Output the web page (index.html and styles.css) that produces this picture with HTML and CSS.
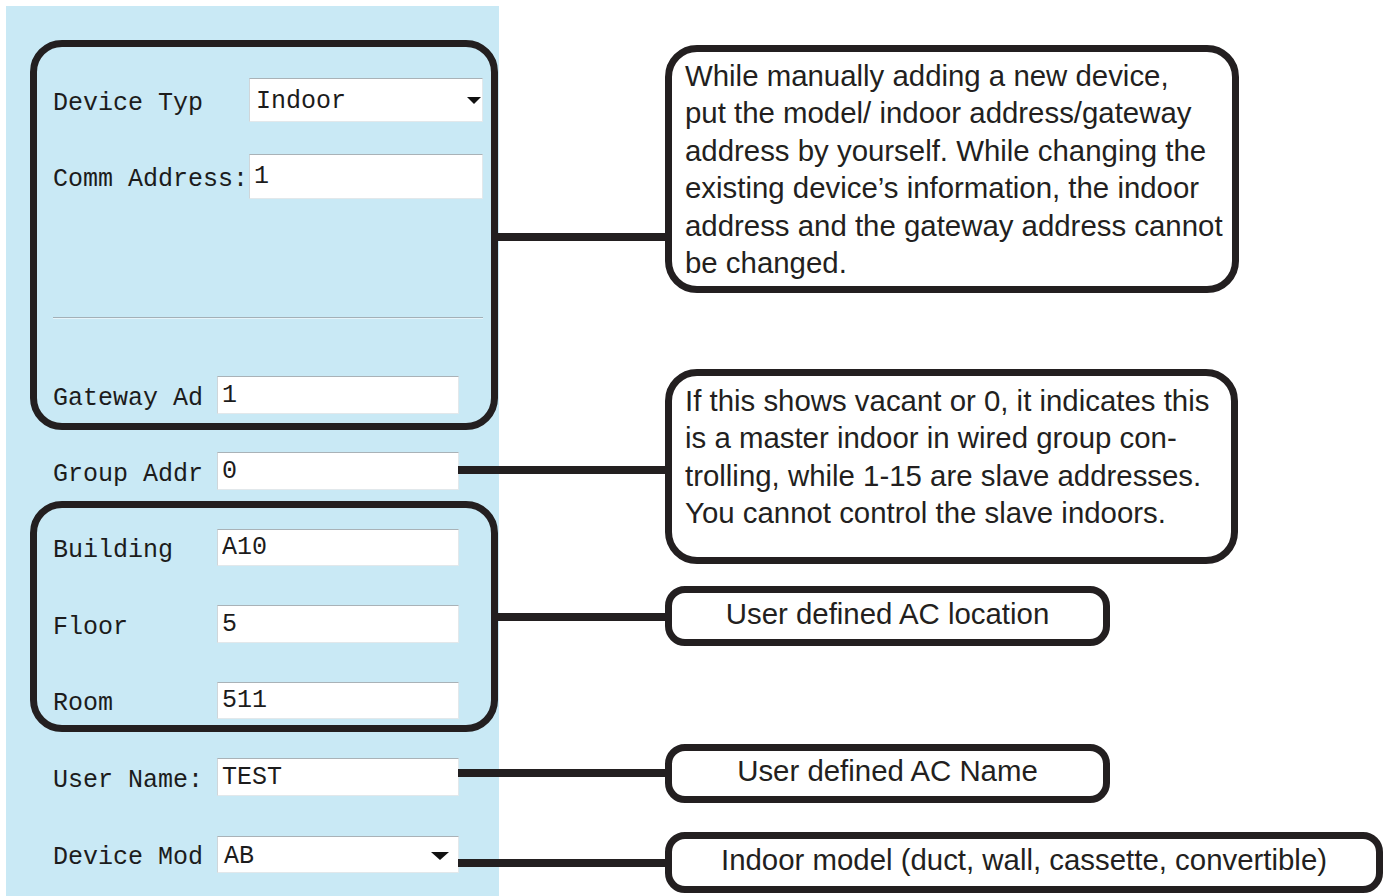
FILE: index.html
```html
<!DOCTYPE html>
<html lang="en">
  <head>
    <meta charset="UTF-8" />
    <meta name="viewport" content="width=device-width, initial-scale=1.0" />
    <title>Device settings</title>
    <link rel="stylesheet" href="styles.css">
  </head>
  <body>
    <div class="page">
      <!-- settings form -->
      <div class="panel">
        <div class="group group-top">
          <div class="row row-type">
            <span class="label label-wide">Device Typ</span>
            <div class="field field-wide select">Indoor<span class="arrow"></span></div>
          </div>
          <div class="row row-comm">
            <span class="label label-wide">Comm Address:</span>
            <input class="field field-wide" type="text" value="1" readonly />
          </div>
          <div class="sep"></div>
          <div class="row row-gateway">
            <span class="label">Gateway Ad</span>
            <input class="field" type="text" value="1" readonly />
          </div>
        </div>

        <div class="row row-group">
          <span class="label">Group Addr</span>
          <input class="field" type="text" value="0" readonly />
        </div>

        <div class="group group-loc">
          <div class="row row-building">
            <span class="label">Building</span>
            <input class="field" type="text" value="A10" readonly />
          </div>
          <div class="row row-floor">
            <span class="label">Floor</span>
            <input class="field" type="text" value="5" readonly />
          </div>
          <div class="row row-room">
            <span class="label">Room</span>
            <input class="field" type="text" value="511" readonly />
          </div>
        </div>

        <div class="row row-user">
          <span class="label">User Name:</span>
          <input class="field" type="text" value="TEST" readonly />
        </div>

        <div class="row row-model">
          <span class="label">Device Mod</span>
          <div class="field select select-model">AB<span class="arrow"></span></div>
        </div>
      </div>

      <!-- connectors -->
      <div class="wire wire-top"></div>
      <div class="wire wire-group"></div>
      <div class="wire wire-loc"></div>
      <div class="wire wire-user"></div>
      <div class="wire wire-model"></div>

      <!-- notes -->
      <div class="note note-top">
        <p>While manually adding a new device,<br>put the model/ indoor address/gateway<br>address by yourself. While changing the<br>existing device’s information, the indoor<br>address and the gateway address cannot<br>be changed.</p>
      </div>
      <div class="note note-group">
        <p>If this shows vacant or 0, it indicates this<br>is a master indoor in wired group con-<br>trolling, while 1-15 are slave addresses.<br>You cannot control the slave indoors.</p>
      </div>
      <div class="note note-short note-loc">User defined AC location</div>
      <div class="note note-short note-user">User defined AC Name</div>
      <div class="note note-short note-model">Indoor model (duct, wall, cassette, convertible)</div>
    </div>
  </body>
</html>
```

FILE: styles.css
```css
body {
  margin: 0;
  background: #fff;
  overflow: hidden;
}

.page {
  position: relative;
  width: 1391px;
  height: 896px;
  padding: 6px 0 0 6px;
  box-sizing: border-box;
}

/* left form panel */
.panel {
  width: 493px;
  height: 890px;
  padding: 34px 1px 0 24px;
  box-sizing: border-box;
  background: #c9e9f5;
  display: flex;
  flex-direction: column;
}

.group {
  width: 468px;
  border: 7px solid #231f20;
  border-radius: 32px;
  box-sizing: border-box;
  display: flex;
  flex-direction: column;
}

.group-top {
  height: 390px;
  padding: 31px 8px 9px 16px;
}

.group-loc {
  height: 231px;
  margin-top: 11px;
  padding: 21px 8px 6px 16px;
}

.row {
  display: flex;
  align-items: center;
}

.label {
  width: 164px;
  flex-shrink: 0;
  padding-top: 6px;
  font-family: "Liberation Mono", "Courier New", monospace;
  font-size: 25px;
  color: #1c1c1c;
  white-space: nowrap;
}

.label-wide {
  width: 196px;
}

.field {
  position: relative;
  width: 242px;
  height: 38px;
  margin: 0;
  padding: 0 4px;
  box-sizing: border-box;
  border: 1px solid #e2e8eb;
  border-top-color: #a9b2b7;
  border-left-color: #cfd6da;
  border-radius: 0;
  background: #fff;
  font-family: "Liberation Mono", "Courier New", monospace;
  font-size: 25px;
  color: #1c1c1c;
  outline: none;
}

.field-wide {
  width: 234px;
}

.select {
  display: flex;
  align-items: center;
  padding-left: 6px;
  padding-top: 3px;
}

.arrow {
  position: absolute;
  right: 1px;
  top: 50%;
  margin-top: -3px;
  width: 0;
  height: 0;
  border-left: 7px solid transparent;
  border-right: 7px solid transparent;
  border-top: 7px solid #111;
}

.select-model .arrow {
  right: 9px;
  border-left-width: 9px;
  border-right-width: 9px;
  border-top-width: 8px;
}

.row-type .field { height: 44px; }
.row-comm { margin-top: 32px; }
.row-comm .field { height: 45px; }

.sep {
  width: 430px;
  height: 0;
  margin-top: 118px;
  border-top: 1px solid #a3b0b7;
  border-bottom: 1px solid #e6f4fa;
}

.row-gateway { margin-top: 57px; }

.row-group {
  margin-top: 22px;
  padding-left: 23px;
}

.row-building .field { height: 37px; }
.row-floor { margin-top: 39px; }
.row-room { margin-top: 39px; }
.row-room .field { height: 37px; }

.row-user {
  margin-top: 26px;
  padding-left: 23px;
}

.row-model {
  margin-top: 40px;
  padding-left: 23px;
}

.row-model .field { height: 37px; }

/* connector lines */
.wire {
  position: absolute;
  height: 8px;
  background: #231f20;
}

.wire-top { left: 498px; top: 233px; width: 170px; }
.wire-group { left: 458px; top: 466px; width: 210px; }
.wire-loc { left: 498px; top: 613px; width: 170px; }
.wire-user { left: 458px; top: 769px; width: 210px; }
.wire-model { left: 458px; top: 859px; width: 210px; }

/* callout notes */
.note {
  position: absolute;
  left: 665px;
  border: 7px solid #231f20;
  border-radius: 32px;
  background: #fff;
  box-sizing: border-box;
  font-family: "Liberation Sans", Arial, sans-serif;
  font-size: 29.4px;
  color: #231f20;
}

.note p {
  margin: 0;
  line-height: 37.4px;
  white-space: nowrap;
}

.note-top {
  top: 45px;
  width: 574px;
  height: 248px;
  padding: 5px 0 0 13px;
}

.note-group {
  top: 369px;
  width: 573px;
  height: 195px;
  padding: 6px 0 0 13px;
}

.note-short {
  display: flex;
  align-items: center;
  justify-content: center;
  padding-bottom: 5px;
  border-radius: 20px;
  white-space: nowrap;
}

.note-loc { top: 586px; width: 445px; height: 60px; }
.note-user { top: 744px; width: 445px; height: 59px; }
.note-model { top: 832px; width: 718px; height: 61px; }
```
